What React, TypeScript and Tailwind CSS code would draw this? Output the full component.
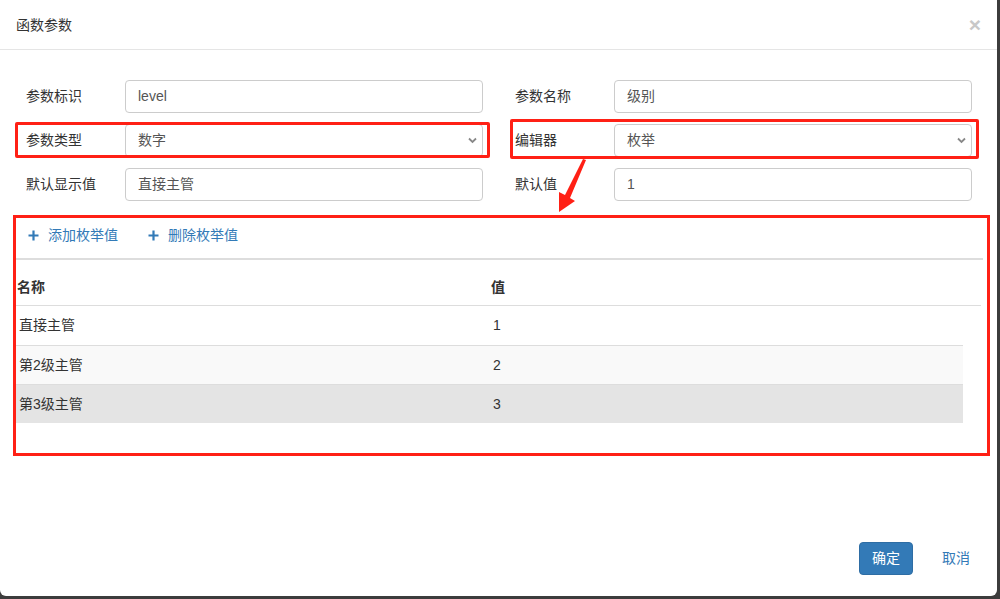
import React from "react";

const font = "font-['Liberation_Sans','Noto_Sans_CJK_SC',sans-serif]";

function Field({ label, value, select }: { label: string; value: string; select?: boolean }) {
  return (
    <div className="flex items-start">
      <div className="w-[99px] pt-[6px] text-[14px] leading-[20px] text-[#333]">{label}</div>
      <div className="relative flex h-[33px] w-[358px] items-center rounded-[4px] border border-[#ccc] bg-white pl-[12px] text-[14px] text-[#555]">
        {value}
        {select && (
          <svg className="absolute right-[5px] top-[12px]" width="9" height="7" viewBox="0 0 9 7">
            <path d="M1 1.5 L4.5 5 L8 1.5" fill="none" stroke="#888" strokeWidth="1.8" />
          </svg>
        )}
      </div>
    </div>
  );
}

function PlusIcon() {
  return (
    <svg width="11" height="11" viewBox="0 0 11 11">
      <path d="M5.5 0.5 V10.5 M0.5 5.5 H10.5" stroke="#337ab7" strokeWidth="2.2" />
    </svg>
  );
}

export default function App() {
  const rows = [
    { name: "直接主管", value: "1", bg: "bg-white" },
    { name: "第2级主管", value: "2", bg: "bg-[#f9f9f9] border-t border-[#ddd]" },
    { name: "第3级主管", value: "3", bg: "bg-[#e4e4e4] border-t border-[#ddd]" },
  ];

  return (
    <div className={`h-[599px] w-[1000px] overflow-hidden bg-[#3c3c3c] ${font}`}>
      <div className="relative flex h-[596px] w-[997px] flex-col rounded-b-[6px] bg-white">
        {/* Header */}
        <div className="flex h-[50px] items-center justify-between border-b border-[#e5e5e5] pl-[16px] pr-[16px]">
          <span className="text-[14px] leading-[20px] text-[#333]">函数参数</span>
          <span className="text-[21px] font-bold leading-none text-[#c8c8c8]">×</span>
        </div>

        {/* Form */}
        <div className="grid grid-cols-[457px_457px] gap-x-[32px] gap-y-[11px] pl-[26px] pt-[30px]">
          <Field label="参数标识" value="level" />
          <Field label="参数名称" value="级别" />
          <Field label="参数类型" value="数字" select />
          <Field label="编辑器" value="枚举" select />
          <Field label="默认显示值" value="直接主管" />
          <Field label="默认值" value="1" />
        </div>

        {/* Enum table */}
        <div className="ml-[13px] mt-[14px] h-[241px] w-[977px] border-[3px] border-[#ff2015]">
          <div className="flex h-[40px] items-start gap-[30px] pl-[12px] pt-[7px] text-[14px] leading-[20px] text-[#337ab7]">
            <div className="flex h-[20px] items-center gap-[9px]">
              <PlusIcon />
              <span>添加枚举值</span>
            </div>
            <div className="flex h-[20px] items-center gap-[9px]">
              <PlusIcon />
              <span>删除枚举值</span>
            </div>
          </div>
          <div className="mr-[4px] h-[2px] bg-[#ddd]" />
          <div className="mr-[6px] grid h-[46px] grid-cols-[474px_1fr] items-start border-b border-[#ddd] pl-[1px] pt-[17px] text-[14px] font-bold leading-[20px] text-[#333]">
            <span>名称</span>
            <span>值</span>
          </div>
          <div className="mr-[24px]">
            {rows.map((r) => (
              <div
                key={r.name}
                className={`grid h-[39px] grid-cols-[474px_1fr] items-center pl-[3px] text-[14px] text-[#333] ${r.bg}`}
              >
                <span>{r.name}</span>
                <span>{r.value}</span>
              </div>
            ))}
          </div>
        </div>

        {/* Footer */}
        <div className="mt-auto flex items-center justify-end pb-[21px] pr-[15px]">
          <button className="h-[33px] w-[54px] rounded-[4px] border border-[#2e6da4] bg-[#337ab7] text-[14px] text-white">
            确定
          </button>
          <button className="ml-[17px] px-[12px] text-[14px] text-[#337ab7]">取消</button>
        </div>

        {/* Annotations */}
        <div className="pointer-events-none absolute left-[15px] top-[122px] h-[36px] w-[475px] rounded-[2px] border-[3px] border-[#ff2015]" />
        <div className="pointer-events-none absolute left-[510px] top-[119px] h-[40px] w-[469px] rounded-[2px] border-[3px] border-[#ff2015]" />
        <svg className="pointer-events-none absolute left-0 top-0" width="997" height="596">
          <polygon
            points="586,160 570,198 575,201 559,212 559,192 565,195 583,159"
            fill="#ff2015"
          />
        </svg>
      </div>
    </div>
  );
}
